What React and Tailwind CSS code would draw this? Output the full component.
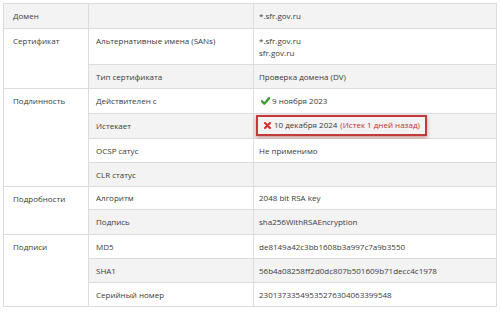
import React from "react";

const font = { fontFamily: '"Open Sans", "Noto Sans", sans-serif' };

function Check() {
  return (
    <svg width="9" height="8" viewBox="0 0 9 8" className="mr-[2px] shrink-0">
      <path d="M0.9 4.3 L3.3 6.7 L8.2 1.1" fill="none" stroke="#3f9a36" strokeWidth="2.3" strokeLinecap="round" strokeLinejoin="round" />
    </svg>
  );
}

function Cross() {
  return (
    <svg width="7" height="7" viewBox="0 0 7 7" className="mr-[3px] shrink-0">
      <path d="M1 1 L6 6 M6 1 L1 6" fill="none" stroke="#d42a2a" strokeWidth="2" strokeLinecap="round" />
    </svg>
  );
}

const groups = [
  {
    label: "Домен",
    gray: true,
    rows: [{ k: "", v: "*.sfr.gov.ru", h: "h-[24px]", gray: true }],
  },
  {
    label: "Сертификат",
    rows: [
      { k: "Альтернативные имена (SANs)", v: ["*.sfr.gov.ru", "sfr.gov.ru"], h: "h-[36px]", multi: true },
      { k: "Тип сертификата", v: "Проверка домена (DV)", h: "h-[23px]", gray: true },
    ],
  },
  {
    label: "Подлинность",
    rows: [
      { k: "Действителен с", v: "valid", h: "h-[25px]" },
      { k: "Истекает", v: "expired", h: "h-[25px]", gray: true },
      { k: "OCSP сатус", v: "Не применимо", h: "h-[24px]" },
      { k: "CLR статус", v: "", h: "h-[23px]", gray: true },
    ],
  },
  {
    label: "Подробности",
    rows: [
      { k: "Алгоритм", v: "2048 bit RSA key", h: "h-[23px]" },
      { k: "Подпись", v: "sha256WithRSAEncryption", h: "h-[24px]", gray: true },
    ],
  },
  {
    label: "Подписи",
    rows: [
      { k: "MD5", v: "de8149a42c3bb1608b3a997c7a9b3550", h: "h-[24px]" },
      { k: "SHA1", v: "56b4a08258ff2d0dc807b501609b71decc4c1978", h: "h-[24px]", gray: true },
      { k: "Серийный номер", v: "23013733549535276304063399548", h: "h-[23px]" },
    ],
  },
];

function Value({ v }) {
  if (v === "valid") {
    return (
      <div className="flex items-center pl-[7px]">
        <Check />
        <span>9 ноября 2023</span>
      </div>
    );
  }
  if (v === "expired") {
    return (
      <div className="flex items-center pl-[2px] pb-[2px]">
        <div className="flex items-center h-[21px] w-[171px] border-2 border-[#c23a3a] pl-[6px] shadow-[0_2px_4px_rgba(140,20,20,0.4)]">
          <Cross />
          <span>10 декабря 2024</span>
          <span className="ml-[3px] text-[#c0312f]">(Истек 1 дней назад)</span>
        </div>
      </div>
    );
  }
  if (Array.isArray(v)) {
    return (
      <div className="pl-[5px] pt-[6px]">
        {v.map((x) => (
          <div key={x}>{x}</div>
        ))}
      </div>
    );
  }
  return <div className="pl-[5px]">{v}</div>;
}

export default function App() {
  return (
    <div className="w-[500px] h-[312px] bg-white pt-[3px] pl-[3px]" style={font}>
      <div className="w-[494px] border-t border-x border-[#dcdcdc] text-[8px] leading-[12px] text-[#3a3a3a]">
        {groups.map((g, gi) => (
          <div key={gi} className="flex border-b border-[#dcdcdc]">
            <div className={`w-[84px] shrink-0 pl-[9px] ${g.gray ? "bg-[#f3f3f3]" : "bg-white"} ${g.rows.length === 1 ? "flex items-center" : "pt-[6px]"}`}>
              {g.label}
            </div>
            <div className="flex-1 flex flex-col">
              {g.rows.map((r, ri) => (
                <div
                  key={ri}
                  className={`flex ${r.h} ${ri < g.rows.length - 1 ? "border-b border-[#dcdcdc]" : ""} ${r.gray ? "bg-[#f3f3f3]" : "bg-white"}`}
                >
                  <div className={`w-[165px] shrink-0 border-l border-[#dcdcdc] pl-[7px] ${r.multi ? "pt-[6px]" : "flex items-center"}`}>
                    {r.k}
                  </div>
                  <div className={`flex-1 border-l border-[#dcdcdc] ${r.multi ? "" : "flex items-center"}`}>
                    <Value v={r.v} />
                  </div>
                </div>
              ))}
            </div>
          </div>
        ))}
      </div>
    </div>
  );
}
